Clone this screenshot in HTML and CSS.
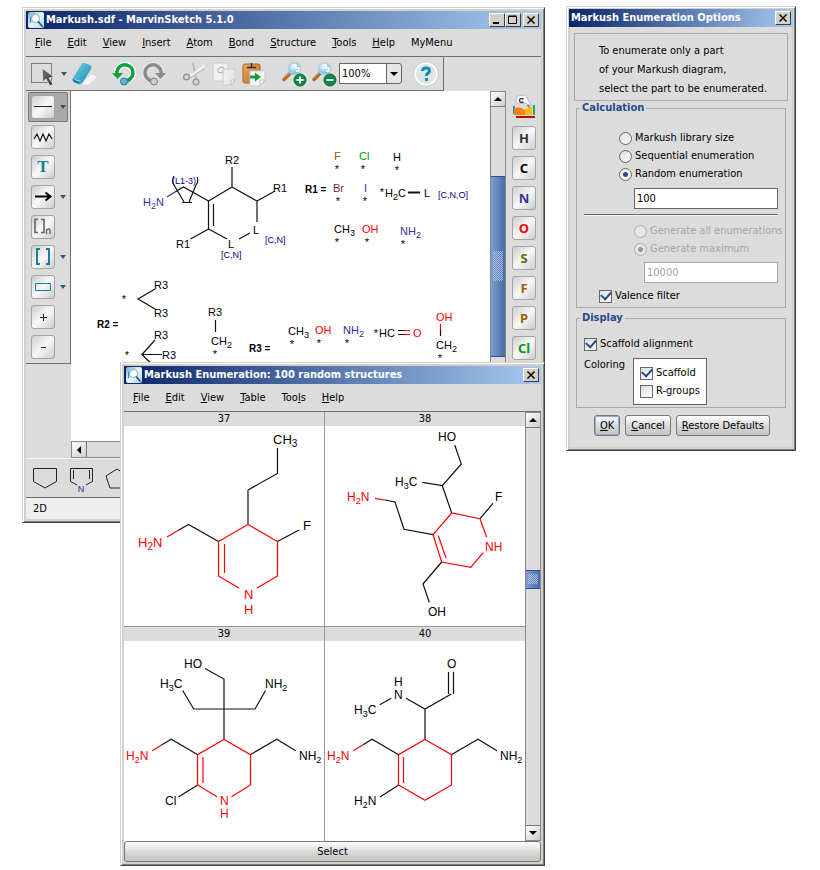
FILE: index.html
```html
<!DOCTYPE html>
<html lang="en">
<head>
<meta charset="utf-8">
<title>MarvinSketch</title>
<link rel="stylesheet" href="styles.css">
</head>
<body>
<svg class="defs" width="0" height="0" aria-hidden="true">
  <defs>
    <linearGradient id="g-app" x1="0" y1="0" x2="1" y2="1"><stop offset="0" stop-color="#6fb3cb"/><stop offset=".5" stop-color="#e8f6fb"/><stop offset="1" stop-color="#a9d3e2"/></linearGradient>
    <linearGradient id="g-blue" x1="0" y1="0" x2="1" y2="1"><stop offset="0" stop-color="#7cd0e8"/><stop offset="1" stop-color="#0f8db3"/></linearGradient>
    <linearGradient id="g-arrow" x1="0" y1="0" x2="1" y2="1"><stop offset="0" stop-color="#777"/><stop offset="1" stop-color="#333"/></linearGradient>
    <linearGradient id="g-clip" x1="0" y1="0" x2="1" y2="1"><stop offset="0" stop-color="#e8ab62"/><stop offset="1" stop-color="#b96c21"/></linearGradient>
    <radialGradient id="g-lens" cx=".4" cy=".35"><stop offset="0" stop-color="#eefaff"/><stop offset="1" stop-color="#7fc4e4"/></radialGradient>
    <symbol id="app" viewBox="0 0 16 16">
      <rect width="16" height="16" rx="2" fill="url(#g-app)"/>
      <path d="M2.500 11V5l4-3" fill="none" stroke="#3d8ba8" stroke-width="1"/>
      <circle cx="7.500" cy="6.500" r="4" fill="#fff" stroke="#8fb9c9" stroke-width="1.200"/>
      <path d="M10.500 10l3.500 4" stroke="#1d5f7c" stroke-width="1.800" stroke-linecap="round"/>
    </symbol>
    <symbol id="lens" viewBox="0 0 26 26">
      <path d="M3 18.500l8-8" stroke="#a9682c" stroke-width="3.500" stroke-linecap="round"/>
      <path d="M3 17.500l7-7" stroke="#d79a5a" stroke-width="1"/>
      <circle cx="13.500" cy="7.500" r="6.200" fill="url(#g-lens)" stroke="#b5cdd8" stroke-width="1.300"/>
      <path d="M12 4h3v3h3v3h-3" fill="none" stroke="#fff" stroke-width="1.500"/>
      <circle cx="19" cy="19" r="6" fill="#0a8a45" stroke="#066632"/>
    </symbol>
  </defs>
</svg>

<main class="desktop">

<section class="window sketch" aria-label="MarvinSketch">
  <header class="title">
    <svg class="app-icon" aria-hidden="true"><use href="#app"/></svg>
    <h1>Markush.sdf - MarvinSketch 5.1.0</h1>
    <div class="win-buttons">
      <button aria-label="Minimize"><svg viewBox="0 0 10 10"><path d="M1 8h6" stroke="#000" stroke-width="2"/></svg></button>
      <button aria-label="Maximize"><svg viewBox="0 0 10 10"><path d="M.5 1.500h8v7h-8zM.5 1h8" fill="none" stroke="#000"/></svg></button>
      <button class="close" aria-label="Close"><svg viewBox="0 0 10 10"><path d="M1.500 1.500l7 7M8.500 1.500l-7 7" stroke="#000" stroke-width="1.500"/></svg></button>
    </div>
  </header>
  <nav class="menu">
    <a href="#"><u>F</u>ile</a><a href="#"><u>E</u>dit</a><a href="#"><u>V</u>iew</a><a href="#"><u>I</u>nsert</a><a href="#"><u>A</u>tom</a><a href="#"><u>B</u>ond</a><a href="#"><u>S</u>tructure</a><a href="#"><u>T</u>ools</a><a href="#"><u>H</u>elp</a><a href="#">MyMenu</a>
  </nav>
  <div class="toolbar-row">
    <div class="toolbar">
      <div class="group tight">
        <button aria-label="Select"><svg viewBox="0 0 26 26"><path d="M1.500 2.500h20v19h-20z" fill="none" stroke="#222" stroke-dasharray="1 1"/><path d="M12 7l1 14 3-3 4 7 3-2-4-6 5-1z" fill="url(#g-arrow)" stroke="#eee" stroke-width=".7"/></svg></button>
        <button class="drop" aria-label="Selection modes"><span class="tri"></span></button>
        <button aria-label="Erase"><svg viewBox="0 0 26 26"><path d="M10 23l11-10 5 3-9 8z" fill="#f5f5f5"/><path d="M10 4q1-3 4-2l5 2q2 1 1 4l-8 13q-2 3-5 2l-4-2q-2-1-1-4z" fill="url(#g-blue)"/><path d="M2 17q2 3 7 3l-2 3-4-2q-2-1-1-4z" fill="#0f86ab"/><path d="M2.500 17q2 3 7 3" fill="none" stroke="#a8e0ef"/></svg></button>
      </div>
      <div class="group">
        <button aria-label="Undo"><svg viewBox="0 0 26 26"><path d="M6 13a8 8 0 1 1 13 5" fill="none" stroke="#fff" stroke-width="6"/><path d="M6 13a8 8 0 1 1 13 5l-3 2" fill="none" stroke="#10a040" stroke-width="3.500"/><path d="M1 12h11l-5.500 6z" fill="#10a040"/><circle cx="13" cy="20.500" r="3.500" fill="#5eb4cd" stroke="#187d98"/></svg></button>
        <button aria-label="Redo"><svg viewBox="0 0 26 26"><path d="M20 13a8 8 0 1 0-13 5" fill="none" stroke="#e8e8e8" stroke-width="6"/><path d="M20 13a8 8 0 1 0-13 5l3 2" fill="none" stroke="#8b8b8b" stroke-width="3.500"/><path d="M14 12h11l-5.500 6z" fill="#8b8b8b"/><circle cx="13" cy="20.500" r="3.500" fill="#ccc" stroke="#777"/></svg></button>
      </div>
      <div class="group">
        <button aria-label="Cut"><svg viewBox="0 0 26 26" fill="none" stroke="#999"><path d="M12 2l3 16" stroke="#bbb" stroke-width="2"/><path d="M24 5L9 16" stroke="#f4f4f4" stroke-width="3"/><path d="M24 7L9 17" stroke="#aaa"/><circle cx="5.500" cy="16" r="2.800" stroke-width="1.500"/><circle cx="15" cy="21" r="2.800" stroke-width="1.500"/></svg></button>
        <button aria-label="Copy"><svg viewBox="0 0 26 26"><path d="M2 2h15v18H2z" fill="#f1f1f1" stroke="#ccc"/><path d="M7 8l3-2 3 1-1 4-3 1-2-1z" fill="none" stroke="#aaa"/><path d="M12 8h12v11l-4 5h-8z" fill="#ececec" fill-opacity=".8" stroke="#ccc"/><path d="M24 19h-4v5z" fill="#fff" stroke="#bbb"/></svg></button>
        <button aria-label="Paste"><svg viewBox="0 0 26 26"><rect x="2" y="3" width="17" height="19" rx="2" fill="url(#g-clip)" stroke="#ad641e"/><path d="M6 6.500h9M10.500 2v4" stroke="#333" stroke-width="1.500"/><path d="M9 10h15v9l-5 6H9z" fill="#f6f6f6" stroke="#ccc"/><path d="M24 19h-5v6z" fill="#fff" stroke="#bbb"/><path d="M9 14.500h5v-3l6 4.500-6 4.500v-3H9z" fill="#139a3f"/></svg></button>
      </div>
      <div class="group">
        <button aria-label="Zoom in"><svg viewBox="0 0 26 26"><use href="#lens"/><path d="M15.500 19h7M19 15.500v7" stroke="#fff" stroke-width="2"/></svg></button>
        <button aria-label="Zoom out"><svg viewBox="0 0 26 26"><use href="#lens"/><path d="M15.500 19h7" stroke="#fff" stroke-width="2"/></svg></button>
      </div>
      <div class="combo"><select aria-label="Zoom"><option>100%</option></select></div>
      <button class="help" aria-label="Help"><svg viewBox="0 0 26 26"><circle cx="13" cy="13" r="11" fill="#dfe4e6" stroke="#fff" stroke-width="2"/><circle cx="13" cy="13" r="12.300" fill="none" stroke="#bcc5c8" stroke-width=".7"/><path d="M9.500 10Q9.500 7 13 7t3.500 2.700c0 2.600-3.200 2.500-3.200 5.300" fill="none" stroke="#128db4" stroke-width="3"/><path d="M12 17h3v3h-3z" fill="#128db4"/></svg></button>
    </div>
  </div>

  <div class="work">
    <aside class="left-tools">
      <div class="tool pressed"><button aria-label="Single bond"><svg viewBox="0 0 22 22"><path d="M2 10.500h18" stroke="#222"/></svg></button><span class="tri"></span></div>
      <div class="tool"><button aria-label="Chain"><svg viewBox="0 0 22 22"><path d="M2 13l3-5 3 7 3-7 3 7 3-7 3 5" fill="none" stroke="#111" stroke-width="1.200"/></svg></button></div>
      <div class="tool"><button class="text-tool" aria-label="Text">T</button></div>
      <div class="tool"><button aria-label="Arrow"><svg viewBox="0 0 22 22"><path d="M3 10.500h14M13.500 6.500l5 4-5 4" fill="none" stroke="#000" stroke-width="2"/></svg></button><span class="tri"></span></div>
      <div class="tool"><button aria-label="Repeating group"><svg viewBox="0 0 22 22"><path d="M6 3.500H3v13h3M9 3.500h3v13H9" fill="none" stroke="#666" stroke-width="1.600"/><path d="M14.500 18v-5M14.500 14q3.500-2 3.500 0v4" fill="none" stroke="#666" stroke-width="1.300"/></svg></button></div>
      <div class="tool"><button aria-label="Brackets"><svg viewBox="0 0 22 22"><path d="M8 3H5v15h3M14 3h3v15h-3" fill="none" stroke="#187f98" stroke-width="2"/></svg></button><span class="tri"></span></div>
      <div class="tool"><button aria-label="Rectangle"><svg viewBox="0 0 22 22"><path d="M3.500 7.500h15v7h-15z" fill="none" stroke="#187f98"/></svg></button><span class="tri"></span></div>
      <div class="tool"><button aria-label="Increase charge"><svg viewBox="0 0 22 22"><path d="M8 11.500h7M11.500 8v7" stroke="#222"/></svg></button></div>
      <div class="tool"><button aria-label="Decrease charge"><svg viewBox="0 0 22 22"><path d="M9 11.500h5" stroke="#222"/></svg></button></div>
    </aside>

    <div class="canvas">
      <svg class="mol small" viewBox="71 91 419 350">
        <g class="bonds">
          <path d="M232 167v20M232 187l25 14M257 201l18-10M257 201v21M250 233l-11 6M227 239l-18.500-10M208.500 229v-28M213.500 226v-22M208.500 229l-18 10M208.500 201L232 187M208.500 201L183.500 187L175 192"/>
          <path d="M174 176q-3 5 0 9l10 17M197 177q2 4-1 8l-7 17M182 202.500h10"/>
          <path d="M408 192.500h12" stroke-width="2"/>
          <path d="M155 289l-17 10 17 10M155 340l-13 14.500h20M142 354.500l22 22M215.500 320v12M398 330.500h6M398 334.500h6M440.500 330v6"/>
        </g>
        <path class="n-bond" d="M175 192l-8 5"/>
        <path class="red-bond" d="M404 330.500h6M404 334.500h6M440.500 324v6"/>
        <text x="225" y="164">R2</text><text x="273" y="192">R1</text><text x="176" y="248">R1</text>
        <text x="253" y="234">L</text><text x="228" y="248">L</text>
        <text class="blue" x="143" y="206">H<tspan class="sub" dy="3">2</tspan><tspan dy="-3">N</tspan></text>
        <g class="note"><text x="172" y="184">(L1-3)</text><text x="265" y="243">[C,N]</text><text x="221" y="258">[C,N]</text><text x="438" y="198">[C,N,O]</text></g>
        <g class="head"><text x="305" y="193">R1 =</text><text x="97" y="328">R2 =</text><text x="249" y="352">R3 =</text></g>
        <text class="brown" x="334" y="160">F</text><text class="green" x="359" y="160">Cl</text><text x="393" y="161">H</text>
        <text class="maroon" x="333" y="192">Br</text><text class="purple" x="364" y="192">I</text>
        <text x="385" y="197">H<tspan class="sub" dy="3">2</tspan><tspan dy="-3">C</tspan></text><text x="424" y="197">L</text>
        <text x="334" y="233">CH<tspan class="sub" dy="3">3</tspan></text><text class="red" x="362" y="233">OH</text><text class="blue" x="400" y="235">NH<tspan class="sub" dy="3">2</tspan></text>
        <text x="154" y="289">R3</text><text x="154" y="317">R3</text><text x="154" y="339">R3</text><text x="162" y="359">R3</text>
        <text x="208" y="316">R3</text><text x="211" y="345">CH<tspan class="sub" dy="3">2</tspan></text>
        <text x="288" y="335">CH<tspan class="sub" dy="3">3</tspan></text><text class="red" x="315" y="334">OH</text><text class="blue" x="343" y="334">NH<tspan class="sub" dy="3">2</tspan></text>
        <text x="379" y="337">HC</text><text class="red" x="413" y="337">O</text><text class="red" x="436" y="321">OH</text><text x="436" y="349">CH<tspan class="sub" dy="3">2</tspan></text>
        <g class="stars"><text x="337" y="173">*</text><text x="363" y="173">*</text><text x="397" y="174">*</text><text x="338" y="205">*</text><text x="365" y="205">*</text><text x="382" y="196">*</text><text x="337" y="246">*</text><text x="367" y="246">*</text><text x="403" y="248">*</text><text x="124" y="303">*</text><text x="127" y="359">*</text><text x="215" y="358">*</text><text x="292" y="348">*</text><text x="319" y="347">*</text><text x="347" y="347">*</text><text x="376" y="337">*</text><text x="440" y="362">*</text></g>
      </svg>
      <div class="hscroll"><button aria-label="Scroll left"><span class="arr left"></span></button></div>
    </div>
    <div class="vscroll main-scroll">
      <button aria-label="Scroll up"><span class="arr up"></span></button>
      <span class="before"></span><span class="thumb"></span><span class="after"></span>
      <button aria-label="Scroll down"><span class="arr down"></span></button>
    </div>
    <aside class="right-tools">
      <button class="periodic" aria-label="Periodic table"><svg viewBox="0 0 24 24"><path d="M1 10h2v8H1z" fill="#1793bd"/><path d="M2 13q5-4 11 1v5H2z" fill="#fa8212"/><path d="M13 13l7-2v8h-7z" fill="#ffb90f"/><path d="M21 9h2v10h-2z" fill="#17ad52"/><path d="M4 20h19v2H4z" fill="#b60808"/><path d="M5 0l9-1 5 11-6-3-7 1-2-3z" fill="#f6f6f6" stroke="#aaa" stroke-width=".7"/><path d="M11.500 3q-4-1-4 1.500t4 1.500" fill="none" stroke="#333" stroke-width="1.300"/><path d="M16 8l3 5-4-3z" fill="#777"/></svg></button>
      <button class="el h">H</button><button class="el c">C</button><button class="el n">N</button><button class="el o">O</button><button class="el s">S</button><button class="el f">F</button><button class="el f">P</button><button class="el cl">Cl</button>
    </aside>
  </div>

  <div class="templates">
    <button aria-label="Cyclopentane"><svg viewBox="0 0 26 26"><path d="M1.500 3.500h23v13l-11.500 6.500-11.500-6.500z" fill="none" stroke="#222"/></svg></button>
    <button aria-label="Pyrrole"><svg viewBox="0 0 26 26"><path d="M9 20l-6.500-3.500v-13h22v13L18 20M5.500 5v9M21.500 5v9" fill="none" stroke="#222"/><text x="13" y="27" class="n-label">N</text></svg></button>
    <button aria-label="Pentane ring"><svg viewBox="0 0 26 26"><path d="M13 4l-11 7 4 12h14l4-12z" fill="none" stroke="#222"/></svg></button>
  </div>
  <footer class="status">2D</footer>
</section>

<section class="window results" aria-label="Markush Enumeration">
  <header class="title">
    <svg class="app-icon" aria-hidden="true"><use href="#app"/></svg>
    <h1>Markush Enumeration: 100 random structures</h1>
    <div class="win-buttons"><button aria-label="Close"><svg viewBox="0 0 10 10"><path d="M1.500 1.500l7 7M8.500 1.500l-7 7" stroke="#000" stroke-width="1.500"/></svg></button></div>
  </header>
  <nav class="menu">
    <a href="#"><u>F</u>ile</a><a href="#"><u>E</u>dit</a><a href="#"><u>V</u>iew</a><a href="#"><u>T</u>able</a><a href="#">Too<u>l</u>s</a><a href="#"><u>H</u>elp</a>
  </nav>
  <div class="results-body">
    <div class="cells">
      <article class="cell"><h2>37</h2>
        <svg class="mol large" viewBox="124 426 200 200">
          <path class="bonds" d="M277.500 448v25.500L248 490v34M277.500 541.500L299 530M218.500 541.500L188.500 524.500 178 530.500"/>
          <path class="red-bond" d="M178 530.500L167 537M248 524.500l29.500 17V576L257 588M239 588L218.500 576v-34.500L248 524.500M224.500 544v29"/>
          <text x="273" y="444">CH<tspan class="sub" dy="3">3</tspan></text><text x="303" y="530">F</text>
          <g class="red"><text x="138" y="547">H<tspan class="sub" dy="3">2</tspan><tspan dy="-3">N</tspan></text><text x="244" y="599">N</text><text x="244" y="614">H</text></g>
        </svg></article>
      <article class="cell"><h2>38</h2>
        <svg class="mol" viewBox="325 426 200 200">
          <path class="bonds" d="M454.700 445l6.600 19-19 21.700-20-3.400M442.300 485.700l9.400 27.300M480 518.700l13-15.400M433 534.700l-29-5.400-9-27.300-10-2M441.700 562L423 584l6.300 18.300"/>
          <path class="red-bond" d="M385 500l-10-1.700M486.700 537.300L480 518.700 451.700 513 433 534.700l8.700 27.300 29 5.300 12.600-14.600M438.300 535.700L446 558"/>
          <text x="438" y="441">HO</text><text x="395" y="486">H<tspan class="sub" dy="3">3</tspan><tspan dy="-3">C</tspan></text><text x="495" y="501">F</text><text x="428" y="616">OH</text>
          <g class="red"><text x="347" y="501">H<tspan class="sub" dy="3">2</tspan><tspan dy="-3">N</tspan></text><text x="485" y="551">NH</text></g>
        </svg></article>
      <article class="cell"><h2>39</h2>
        <svg class="mol" viewBox="124 641 200 200">
          <path class="bonds" d="M205 668.500l19 10.500v60.500M182.700 690.500l11 18.500H255l10.500-18.500M197.700 754.700l-26.400-15.400-9.300 5.400M250.300 754.700l26.400-15.400 19 11.400M197.700 785l-19.400 12"/>
          <path class="red-bond" d="M162 744.700l-9.700 6M224 739.500l26.500 15.200V785l-19 11.700M217 796.700L197.500 785v-30.300L224 739.500M203 757v26"/>
          <text x="184" y="668">HO</text><text x="160" y="688">H<tspan class="sub" dy="3">3</tspan><tspan dy="-3">C</tspan></text><text x="265" y="688">NH<tspan class="sub" dy="3">2</tspan></text><text x="299" y="760">NH<tspan class="sub" dy="3">2</tspan></text><text x="165" y="805">Cl</text>
          <g class="red"><text x="126" y="760">H<tspan class="sub" dy="3">2</tspan><tspan dy="-3">N</tspan></text><text x="220" y="805">N</text><text x="220" y="818">H</text></g>
        </svg></article>
      <article class="cell"><h2>40</h2>
        <svg class="mol" viewBox="325 641 200 200">
          <path class="bonds" d="M448.500 672v22M453.500 672v22M451.300 694L425 709l-19-10.700M425 709v30.500M391.300 698.300l-11.600 6.400M398.700 754.700L372 739.300l-9 5.400M451.300 754.700l26.700-15.400 19 11.400M398.700 785L380 797"/>
          <path class="red-bond" d="M363 744.700l-9.700 6M425 739.500l26.500 15.200V785L425 800.300 398.500 785v-30.300zM403.500 757v26"/>
          <text x="447" y="668">O</text><text x="394" y="686">H</text><text x="394" y="699">N</text><text x="354" y="714">H<tspan class="sub" dy="3">3</tspan><tspan dy="-3">C</tspan></text><text x="500" y="760">NH<tspan class="sub" dy="3">2</tspan></text><text x="354" y="805">H<tspan class="sub" dy="3">2</tspan><tspan dy="-3">N</tspan></text>
          <text class="red" x="327" y="760">H<tspan class="sub" dy="3">2</tspan><tspan dy="-3">N</tspan></text>
        </svg></article>
    </div>
    <div class="vscroll result-scroll">
      <button aria-label="Scroll up"><span class="arr up"></span></button>
      <span class="before"></span><span class="thumb"></span><span class="after"></span>
      <button aria-label="Scroll down"><span class="arr down"></span></button>
    </div>
  </div>
  <button class="push select-button">Select</button>
</section>

<form class="window options" aria-label="Markush Enumeration Options">
  <header class="title">
    <h1>Markush Enumeration Options</h1>
    <div class="win-buttons"><button type="button" aria-label="Close"><svg viewBox="0 0 10 10"><path d="M1.500 1.500l7 7M8.500 1.500l-7 7" stroke="#000" stroke-width="1.500"/></svg></button></div>
  </header>
  <div class="options-body">
    <p class="info">To enumerate only a part<br>of your Markush diagram,<br>select the part to be enumerated.</p>
    <fieldset class="calc">
      <legend>Calculation</legend>
      <div class="radios">
        <label><input type="radio" name="mode">Markush library size</label>
        <label><input type="radio" name="mode">Sequential enumeration</label>
        <label><input type="radio" name="mode" checked>Random enumeration</label>
      </div>
      <input class="field count" type="text" value="100" aria-label="Number of random structures">
      <hr>
      <div class="radios inner">
        <label><input type="radio" name="limit" disabled>Generate all enumerations</label>
        <label><input type="radio" name="limit" checked disabled>Generate maximum</label>
      </div>
      <input class="field max" type="text" value="10000" disabled aria-label="Maximum">
      <label class="valence"><input type="checkbox" checked>Valence filter</label>
    </fieldset>
    <fieldset class="display">
      <legend>Display</legend>
      <label><input type="checkbox" checked>Scaffold alignment</label>
      <div class="coloring">
        <span>Coloring</span>
        <div class="choices">
          <label><input type="checkbox" checked>Scaffold</label>
          <label><input type="checkbox">R-groups</label>
        </div>
      </div>
    </fieldset>
    <div class="actions">
      <button class="push default" type="button"><u>O</u>K</button>
      <button class="push" type="button"><u>C</u>ancel</button>
      <button class="push" type="button"><u>R</u>estore Defaults</button>
    </div>
  </div>
</form>

</main>
</body>
</html>
```
FILE: styles.css
```css
* { box-sizing: border-box; }

body {
  margin: 0;
  background: #fff;
  color: #000;
  font: 11px/14px "DejaVu Sans Condensed", "DejaVu Sans", sans-serif;
}

button, input, select { font: inherit; color: inherit; margin: 0; padding: 0; }
button { border: 0; background: none; }
a { color: inherit; text-decoration: none; }
h1, h2, p { margin: 0; }
svg { display: block; }
.defs { position: absolute; }

.desktop { position: relative; min-height: 870px; }

/* Windows */
.window {
  position: absolute;
  background: #dcdcdc;
  border: 1px solid;
  border-color: #d4d0c8 #404040 #404040 #d4d0c8;
  box-shadow: inset 1px 1px #fff, inset -1px -1px #808080, inset 0 0 0 3px #d4d0c8;
  padding: 3px;
}
.sketch { left: 22px; top: 7px; width: 523px; }
.results { left: 120px; top: 362px; width: 425px; }
.options { left: 566px; top: 6px; width: 230px; padding: 2px; }

.title {
  display: flex;
  align-items: center;
  gap: 2px;
  height: 18px;
  padding: 0 2px;
  background: linear-gradient(90deg, #0a246a, #a6caf0);
  color: #fff;
}
.title h1 { flex: 1; font-size: 11px; font-weight: bold; white-space: nowrap; }
.app-icon { width: 16px; height: 16px; }
.win-buttons { display: flex; }
.win-buttons button {
  width: 16px;
  height: 14px;
  padding: 1px 2px;
  background: #d4d0c8;
  border: 1px solid;
  border-color: #fff #404040 #404040 #fff;
}
.win-buttons svg { width: 10px; height: 10px; }
.win-buttons .close { margin-left: 2px; }

.menu {
  display: flex;
  align-items: center;
  gap: 16px;
  height: 28px;
  padding: 0 9px;
  border-bottom: 1px solid #707070;
}

/* Main toolbar */
.toolbar-row { display: flex; }
.toolbar {
  display: flex;
  align-items: center;
  height: 34px;
  padding: 0 4px;
  border-right: 1px solid #707070;
  border-bottom: 1px solid #707070;
}
.toolbar button, .toolbar button svg { width: 26px; height: 26px; }
.group { display: flex; gap: 4px; margin-right: 14px; }
.group.tight { gap: 0; }
.toolbar .drop { width: 15px; display: flex; align-items: center; justify-content: center; }
.group:nth-child(4) { margin-right: 2px; }
.tri { border: 3px solid transparent; border-top: 4px solid #445266; border-bottom: 0; }

.combo { position: relative; }
.combo select {
  display: block;
  width: 63px;
  height: 21px;
  padding: 0 2px;
  appearance: none;
  border: 1px solid #666;
  border-radius: 0 3px 3px 0;
  background: linear-gradient(90deg, #fff 46px, #666 46px, #666 47px, #e6e6e6 47px);
}
.combo::after {
  content: "";
  position: absolute;
  right: 4px;
  top: 9px;
  border: 4px solid transparent;
  border-top-color: #000;
  border-bottom: 0;
}
.help { margin-left: 11px; }

/* Work area */
.work { display: flex; align-items: stretch; }
.left-tools {
  align-self: flex-start;
  width: 45px;
  padding: 1px 2px;
  border: 1px solid #707070;
  border-left: 0;
  border-top: 0;
}
.tool {
  display: flex;
  align-items: center;
  gap: 5px;
  height: 30px;
  padding-left: 3px;
  border-radius: 2px;
}
.tool.pressed { background: #a9a9a9; box-shadow: inset 0 0 0 1px #777; }
.tool button, .el {
  flex: none;
  width: 24px;
  height: 24px;
  border: 1px solid #a4a4a4;
  border-radius: 3px;
  background: linear-gradient(135deg, #cdcdcd, #f8f8f8 50%, #cdcdcd);
}
.tool svg { width: 22px; height: 22px; }
.tool .text-tool { color: #187f98; font: bold 17px/20px "Liberation Serif", serif; }

.canvas { flex: 1; min-width: 0; background: #fff; }
.mol { width: 100%; height: auto; font: 12px "Liberation Sans", sans-serif; }
.mol.small { font-size: 11px; }
.mol.large { font-size: 13px; }
.sub { font-size: 9px; }
.large .sub { font-size: 10px; }
.bonds, .red-bond, .n-bond { fill: none; stroke: #111; stroke-width: 1.2px; }
.red-bond { stroke: #f00; }
.n-bond { stroke: #33339a; }
.red { fill: #f00; }
.blue { fill: #33339a; }
.brown { fill: #8a6000; }
.green { fill: #009a10; }
.maroon { fill: #6a3030; }
.purple { fill: #6a1090; }
.note { font-size: 9px; fill: #000090; }
.head { font-size: 10px; font-weight: bold; }
.stars { font-size: 11px; text-anchor: middle; }
.n-label { font: 9px "Liberation Sans", sans-serif; fill: #2b2ba0; text-anchor: middle; }

.right-tools {
  display: flex;
  flex-direction: column;
  gap: 6px;
  width: 35px;
  padding: 5px 6px 0;
}
.periodic, .periodic svg { width: 24px; height: 24px; }
.periodic svg { overflow: visible; }
.el { font: bold 13px/20px "Noto Sans", sans-serif; }
.h { color: #333; }
.n { color: #33339a; }
.o { color: #f00; }
.s { color: #666600; }
.f { color: #9a6200; }
.cl { color: #009a10; }

/* Scrollbars */
.vscroll {
  display: flex;
  flex-direction: column;
  width: 16px;
  background: #dcdcdc;
  border: 1px solid #888;
}
.vscroll button, .hscroll button {
  display: flex;
  align-items: center;
  justify-content: center;
  width: 14px;
  height: 15px;
  background: linear-gradient(135deg, #fff, #ccc);
}
.vscroll button { border-bottom: 1px solid #777; }
.vscroll button:last-child { border-top: 1px solid #777; border-bottom: 0; }
.hscroll { height: 17px; background: #dcdcdc; border: 1px solid #888; }
.hscroll button { width: 15px; border-right: 1px solid #777; }
.thumb {
  display: flex;
  align-items: center;
  background: linear-gradient(90deg, #7f9fd0, #4a6aa5);
  border: 1px solid #2d4f8f;
  border-width: 1px 0;
}
.thumb::after {
  content: "";
  width: 10px;
  height: 10px;
  margin: auto;
  background:
    linear-gradient(#a9c0e6, #a9c0e6) 0 0 / 0 0,
    conic-gradient(#a9c0e6 25%, transparent 25% 50%, #a9c0e6 50% 75%, transparent 75%) 0 0 / 2px 2px;
}
.main-scroll .thumb::after { height: 30px; }
.main-scroll .before { flex: 69; }
.main-scroll .thumb { flex: 180; }
.main-scroll .after { flex: 86; }
.result-scroll .before { flex: 143; }
.result-scroll .thumb { flex: 17; }
.result-scroll .after { flex: 238; }
.arr { border: 4px solid transparent; }
.up { border-top: 0; border-bottom-color: #000; }
.down { border-bottom: 0; border-top-color: #000; }
.left { border-left: 0; border-right-color: #000; }

.templates {
  display: flex;
  gap: 10px;
  height: 40px;
  padding: 5px 6px;
  border-top: 1px solid #f4f4f4;
  border-bottom: 1px solid #707070;
}
.templates svg { width: 26px; height: 26px; overflow: visible; }
.status { height: 21px; padding: 4px 7px; background: #eee; }

/* Enumeration results */
.results-body { display: flex; }
.cells {
  flex: 1;
  display: grid;
  grid-template-columns: 1fr 1fr;
  gap: 1px;
  background: #999;
}
.cell { background: #fff; }
.cell h2 {
  height: 14px;
  background: #dcdcdc;
  font-size: 11px;
  font-weight: normal;
  text-align: center;
}

.push {
  height: 21px;
  padding: 0 5px;
  border: 1px solid #777;
  border-radius: 3px;
  background: linear-gradient(#fff, #dadada 50%, #c4c4c4);
}
.select-button { display: block; width: 100%; }

/* Options dialog */
.options-body { padding: 6px 5px 12px; }
.info {
  padding: 7px 24px 2px;
  border: 1px solid #aaa;
  line-height: 19px;
  white-space: nowrap;
}
fieldset {
  min-width: 0;
  margin: 0 2px;
  padding: 0 7px;
  border: 1px solid #aaa;
}
legend { padding: 0 2px; margin-left: -4px; color: #2a4a8c; font-weight: bold; }
label { display: flex; align-items: center; gap: 3px; height: 18px; white-space: nowrap; }
.radios { padding: 14px 0 0 35px; }
.radios.inner { padding: 6px 0 0 50px; }
.radios.inner label { color: #a5a5a5; }

input[type="radio"], input[type="checkbox"] {
  appearance: none;
  flex: none;
  width: 13px;
  height: 13px;
  border: 1px solid #666;
  background: linear-gradient(135deg, #dcdcdc, #fff);
}
input[type="radio"] { border-radius: 50%; }
input[type="radio"]:checked { background: radial-gradient(circle, #2a4a8c 2px, #f4f4f4 3px); }
input[type="radio"]:disabled { border-color: #aaa; background: #e6e6e6; }
input[type="radio"]:disabled:checked { background: radial-gradient(circle, #999 2px, #e6e6e6 3px); }
input[type="checkbox"] { display: grid; place-items: center; }
input[type="checkbox"]:checked::after {
  content: "";
  width: 8px;
  height: 5px;
  margin-bottom: 3px;
  border: solid #2a4a8c;
  border-width: 0 0 2px 2px;
  transform: rotate(-48deg);
}
.field {
  display: block;
  height: 21px;
  padding: 0 2px;
  border: 1px solid #666;
  background: #fff;
}
.field:disabled { border-color: #aaa; color: #a5a5a5; }
.count { width: 144px; margin: 5px 0 5px 50px; }
.max { width: 134px; margin: 4px 0 4px 60px; }
hr { margin: 0; border: 0; border-top: 1px solid #666; border-bottom: 1px solid #f4f4f4; }
.valence { padding-left: 15px; }
.calc { padding-bottom: 2px; }
.display { margin-top: 3px; padding-bottom: 2px; }
.display > label { margin-top: 10px; }
.coloring { display: flex; gap: 9px; margin-top: 5px; }
.coloring > span { width: 40px; }
.choices { padding: 5px 6px 4px; border: 1px solid #666; background: #fff; }
.actions { display: flex; gap: 5px; margin: 7px 0 0 20px; }
.default { box-shadow: inset 0 0 0 1px #9aaad0; }
```
